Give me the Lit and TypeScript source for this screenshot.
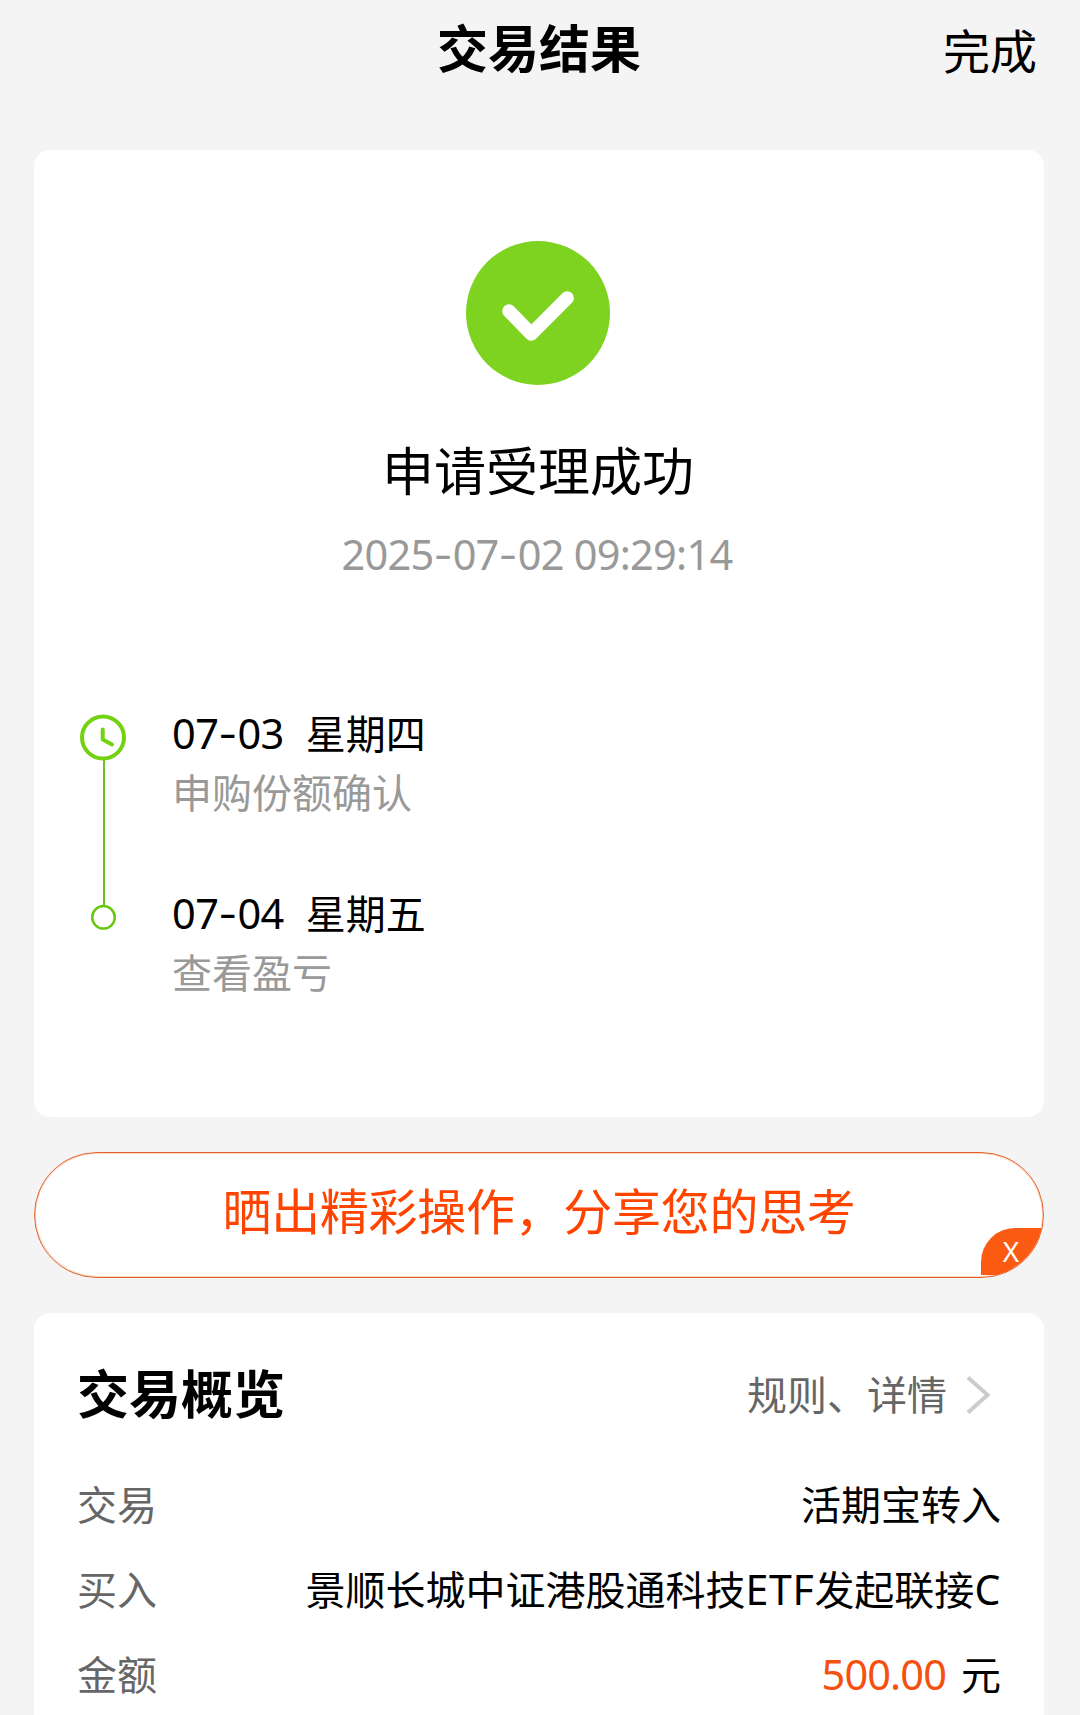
import { LitElement, html, css } from "lit";
import { customElement } from "lit/decorators.js";

interface Step {
  date: string[];
  weekday: string;
  note: string;
}

const STEPS: Step[] = [
  { date: ["07", "03"], weekday: "星期四", note: "申购份额确认" },
  { date: ["07", "04"], weekday: "星期五", note: "查看盈亏" },
];

/** Joins number groups with the wide dash used in dates. */
const dashed = (parts: string[]) =>
  parts.map((p, i) => (i === 0 ? p : html`<span class="dash">-</span>${p}`));

@customElement("app-root")
export class AppRoot extends LitElement {
  static styles = css`
    :host {
      display: block;
      box-sizing: border-box;
      height: 1715px;
      overflow: hidden;
      background: #f4f4f4;
      color: #000;
      font-family: "Inter", "Noto Sans CJK SC", sans-serif;
      font-size: 40px;
    }
    .header {
      display: grid;
      grid-template-columns: 1fr auto 1fr;
      align-items: center;
      height: 99px;
      padding: 0 43px 0 41px;
      margin-bottom: 51px;
    }
    .title {
      grid-column: 2;
      font-size: 51px;
      font-weight: 700;
      line-height: 60px;
    }
    .done {
      justify-self: end;
      font-size: 47px;
      line-height: 60px;
      padding-top: 4px;
    }
    .card {
      box-sizing: border-box;
      margin: 0 36px 0 34px;
      background: #fff;
      border-radius: 16px;
    }
    .result {
      height: 967px;
      padding: 91px 2px 0 0;
      display: flex;
      flex-direction: column;
      align-items: center;
    }
    .check {
      display: block;
      width: 144px;
      height: 144px;
    }
    .status {
      margin-top: 58px;
      font-size: 52px;
      line-height: 60px;
    }
    .num {
      font-family: "Noto Sans", "Noto Sans CJK SC", sans-serif;
      font-size: 41.5px;
      letter-spacing: -0.6px;
    }
    .dash {
      font-family: "Inter", sans-serif;
      letter-spacing: 0;
    }
    .time {
      margin-top: 26px;
      line-height: 50px;
      letter-spacing: -0.75px;
      padding-right: 2px;
      color: #999;
    }
    .timeline {
      align-self: stretch;
      display: flex;
      margin-top: 124px;
      padding-left: 46px;
    }
    .track {
      display: block;
      width: 46px;
      height: 218px;
      margin: 10px 46px 0 0;
    }
    .steps {
      display: flex;
      flex-direction: column;
      gap: 61px;
    }
    .step {
      height: 119px;
    }
    .when {
      display: flex;
      align-items: baseline;
      gap: 22px;
      height: 60px;
      line-height: 58px;
    }
    .note {
      line-height: 59px;
      color: #999;
    }
    .share {
      position: relative;
      box-sizing: border-box;
      height: 126px;
      margin: 35px 36px 35px 34px;
      border: 1px solid #e2622c;
      border-radius: 63px;
      box-shadow: inset 0 0 0 1px #fcd3bd;
      overflow: hidden;
      background: #fff;
      display: flex;
      align-items: center;
      justify-content: center;
      padding-bottom: 5px;
      font-size: 49px;
      line-height: 60px;
      letter-spacing: -0.3px;
      color: #ff4400;
    }
    .close {
      position: absolute;
      right: 0;
      bottom: 2px;
      width: 62px;
      height: 47px;
      box-sizing: border-box;
      padding: 0 2px 2px 0;
      border-top-left-radius: 34px;
      background: #fb5a13;
      color: #fff;
      font-family: "Noto Sans", sans-serif;
      font-size: 28px;
      line-height: 40px;
      letter-spacing: 0;
      display: flex;
      align-items: center;
      justify-content: center;
    }
    .overview {
      height: 440px;
      padding: 53px 43px 0 43px;
    }
    .head {
      display: flex;
      align-items: center;
      justify-content: space-between;
      height: 60px;
      margin-bottom: 37px;
    }
    .heading {
      font-size: 52px;
      font-weight: 700;
      line-height: 60px;
    }
    .more {
      display: flex;
      align-items: center;
      gap: 19px;
      padding-right: 11px;
      color: #666;
      line-height: 60px;
    }
    .chevron {
      display: block;
      width: 24px;
      height: 40px;
      margin-bottom: 2px;
    }
    .row {
      display: flex;
      align-items: center;
      justify-content: space-between;
      height: 85px;
      line-height: 60px;
    }
    .label {
      color: #666;
    }
    .latin {
      font-family: "Noto Sans", sans-serif;
      font-size: 41px;
      letter-spacing: 0.7px;
      line-height: 1;
    }
    .amount {
      display: flex;
      align-items: baseline;
      gap: 15px;
      height: 60px;
      margin-top: -3px;
    }
    .sum {
      color: #f5500f;
      letter-spacing: -0.9px;
    }
  `;

  render() {
    return html`
      <header class="header">
        <div class="title">交易结果</div>
        <div class="done">完成</div>
      </header>

      <section class="card result">
        <svg class="check" viewBox="0 0 144 144">
          <circle cx="72" cy="72" r="72" fill="#7ed321" />
          <path d="M42.9 70 L65.3 93 L101.2 57" fill="none" stroke="#fff"
            stroke-width="13.4" stroke-linecap="round" stroke-linejoin="round" />
        </svg>
        <div class="status">申请受理成功</div>
        <div class="num time">${dashed(["2025", "07", "02 09:29:14"])}</div>
        <div class="timeline">
          <svg class="track" viewBox="0 0 46 218" fill="none">
            <path d="M24 46 V192" stroke="#6cc01f" stroke-width="2" />
            <circle cx="23" cy="23.5" r="21" stroke="#74d212" stroke-width="4" />
            <path d="M22.7 15.5 V25.5 L32 30.5" stroke="#74d212" stroke-width="4"
              stroke-linecap="round" stroke-linejoin="round" />
            <circle cx="23.5" cy="203.3" r="11.3" stroke="#68c812" stroke-width="2.5" />
          </svg>
          <div class="steps">
            ${STEPS.map(
              (s) => html`
                <div class="step">
                  <div class="when">
                    <span class="num">${dashed(s.date)}</span><span>${s.weekday}</span>
                  </div>
                  <div class="note">${s.note}</div>
                </div>
              `
            )}
          </div>
        </div>
      </section>

      <div class="share">
        <span>晒出精彩操作，分享您的思考</span>
        <div class="close">X</div>
      </div>

      <section class="card overview">
        <div class="head">
          <div class="heading">交易概览</div>
          <div class="more">
            <span>规则、详情</span>
            <svg class="chevron" viewBox="0 0 24 40" fill="none">
              <path d="M2 2.5 L21.5 20 L2 37.5" stroke="#ccc" stroke-width="4" />
            </svg>
          </div>
        </div>
        <div class="row">
          <span class="label">交易</span>
          <span>活期宝转入</span>
        </div>
        <div class="row">
          <span class="label">买入</span>
          <span>景顺长城中证港股通科技<span class="latin">ETF</span>发起联接<span class="latin">C</span></span>
        </div>
        <div class="row">
          <span class="label">金额</span>
          <span class="amount"><span class="num sum">500.00</span><span>元</span></span>
        </div>
      </section>
    `;
  }
}
